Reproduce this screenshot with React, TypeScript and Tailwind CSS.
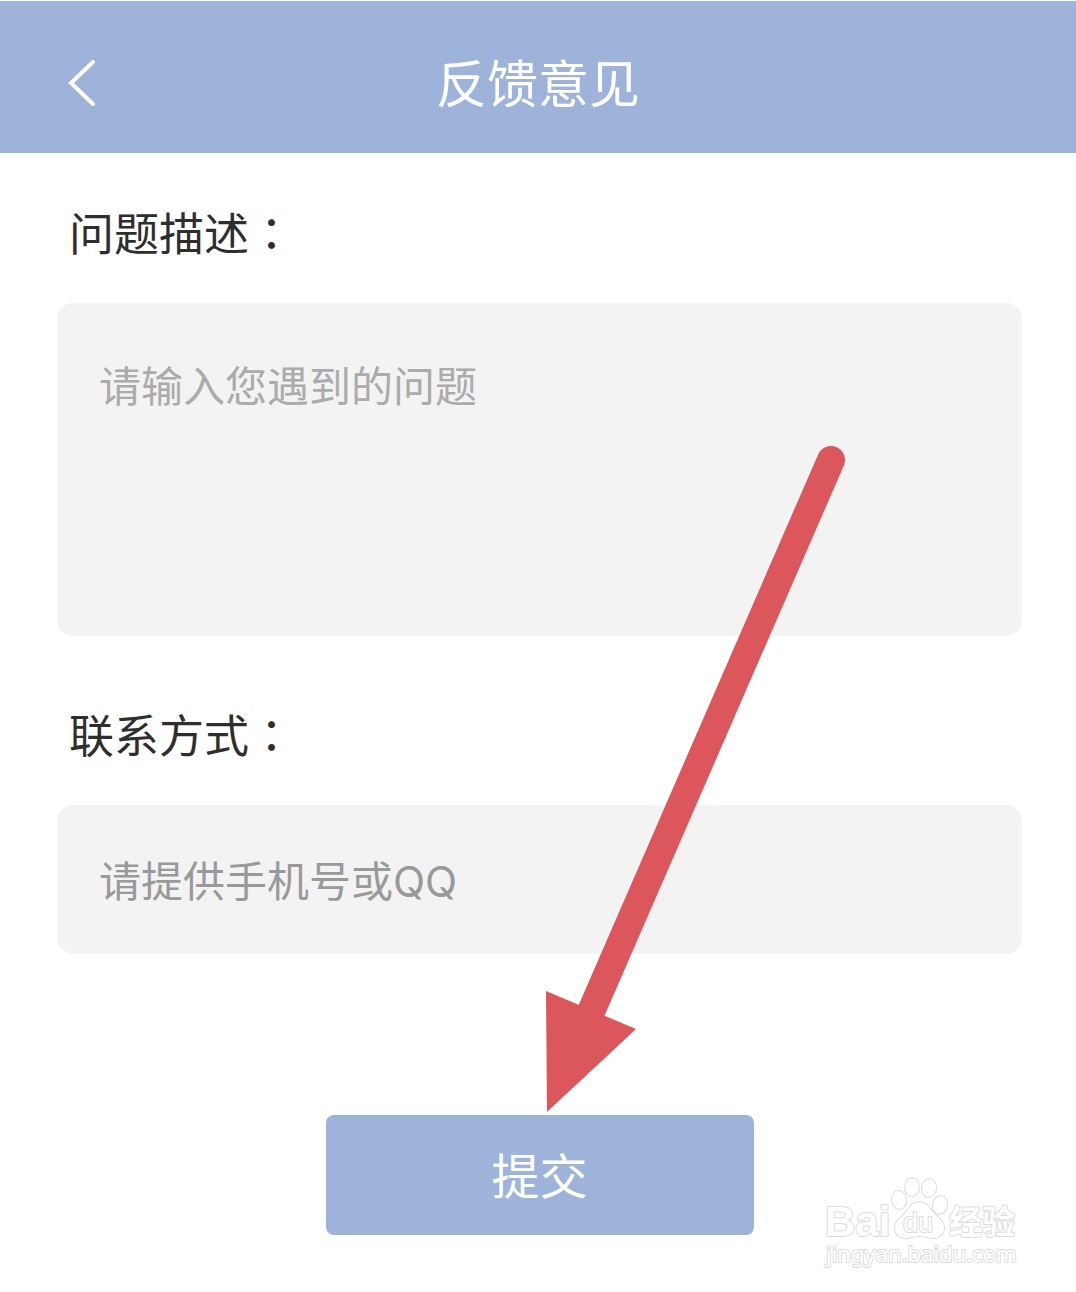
import type { ReactNode } from "react";

type FieldProps = {
  id: string;
  label: string;
  className?: string;
  children: ReactNode;
};

function Field({ id, label, className = "", children }: FieldProps) {
  return (
    <div className={className}>
      <label
        htmlFor={id}
        className="mb-[39px] block h-16 pl-3 font-['Noto_Sans_CJK_SC',sans-serif] text-[45px] leading-[64px] text-[#2e2e2e]"
      >
        {label}
        {/* the traditional form of the colon sits in the middle of its cell */}
        <span lang="zh-TW" className="font-['Noto_Sans_CJK_TC',sans-serif]">：</span>
      </label>
      {children}
    </div>
  );
}

function Header() {
  return (
    <header className="grid h-[153px] grid-cols-[1fr_auto_1fr] items-center border-t border-white bg-[#9db3da] text-white">
      <button type="button" aria-label="返回" className="ml-[62px] mt-3 grid size-12 place-items-center justify-self-start">
        <svg viewBox="0 0 48 48" className="size-12" fill="none" stroke="currentColor" strokeWidth="4" strokeLinecap="round">
          <path d="M31 3 9 24l22 21" />
        </svg>
      </button>
      <h1 className="mt-4 text-[51px] leading-[72px]">反馈意见</h1>
    </header>
  );
}

function Arrow() {
  return (
    <svg viewBox="0 0 320 680" className="pointer-events-none absolute left-1/2 top-[440px] h-[680px] w-[320px]">
      <path d="M293 20 52 574" stroke="#db575c" strokeWidth="28" strokeLinecap="round" />
      <path d="M8 551 98 589 9 672Z" fill="#db575c" />
    </svg>
  );
}

function Watermark() {
  return (
    <svg
      viewBox="0 0 220 110"
      className="pointer-events-none absolute bottom-[17px] right-[46px] h-[110px] w-[220px]"
      fill="#fff"
      stroke="#dcdcdc"
      strokeWidth="2"
      strokeLinejoin="round"
      paintOrder="stroke"
    >
      <text x="15" y="71" className="font-['Liberation_Sans',sans-serif] text-[42px] font-bold">Bai</text>
      <ellipse cx="89" cy="35" rx="7" ry="9" transform="rotate(-8 89 35)" />
      <ellipse cx="102" cy="22" rx="7" ry="9" />
      <ellipse cx="119" cy="23" rx="7" ry="9" transform="rotate(10 119 23)" />
      <ellipse cx="130" cy="40" rx="7" ry="9" transform="rotate(14 130 40)" />
      <path d="M109 37c-6 0-9 4-12 9-4 6-12 9-12 17 0 7 6 11 12 10 5-1 8-2 12-2s8 1 13 2c7 1 12-4 12-10 0-8-8-11-12-17-3-5-7-9-13-9Z" />
      <text x="93" y="67" className="font-['Liberation_Sans',sans-serif] text-[27px]">du</text>
      <text x="139" y="69" className="font-['Noto_Sans_CJK_SC',sans-serif] text-[33px] font-bold">经验</text>
      <text x="16" y="97" className="font-['Noto_Sans',sans-serif] text-[22px]">jingyan.baidu.com</text>
    </svg>
  );
}

export default function App() {
  return (
    <main className="relative min-h-screen overflow-hidden bg-white font-['Inter','Noto_Sans_CJK_SC',sans-serif]" lang="zh-CN">
      <Header />
      <form className="flex flex-col pl-[57px] pr-[54px]" onSubmit={(e) => e.preventDefault()}>
        <Field id="problem" label="问题描述" className="mt-[47px]">
          <textarea
            id="problem"
            placeholder="请输入您遇到的问题"
            className="block h-[333px] w-full resize-none rounded-2xl bg-[#f3f3f3] px-[42px] pt-[52px] text-[42px] leading-[64px] outline-none placeholder:text-[#ababab]"
          />
        </Field>
        <Field id="contact" label="联系方式" className="mt-[66px]">
          <input
            id="contact"
            type="text"
            placeholder="请提供手机号或QQ"
            className="block h-[149px] w-full rounded-2xl bg-[#f3f3f3] px-[42px] pt-1 text-[42px] outline-none placeholder:text-[#999999]"
          />
        </Field>
        <button type="submit" className="mb-14 mt-[161px] h-[120px] w-[428px] self-center rounded-lg bg-[#9db3da] pt-1 text-[48px] text-white">
          提交
        </button>
      </form>
      <Arrow />
      <Watermark />
    </main>
  );
}
